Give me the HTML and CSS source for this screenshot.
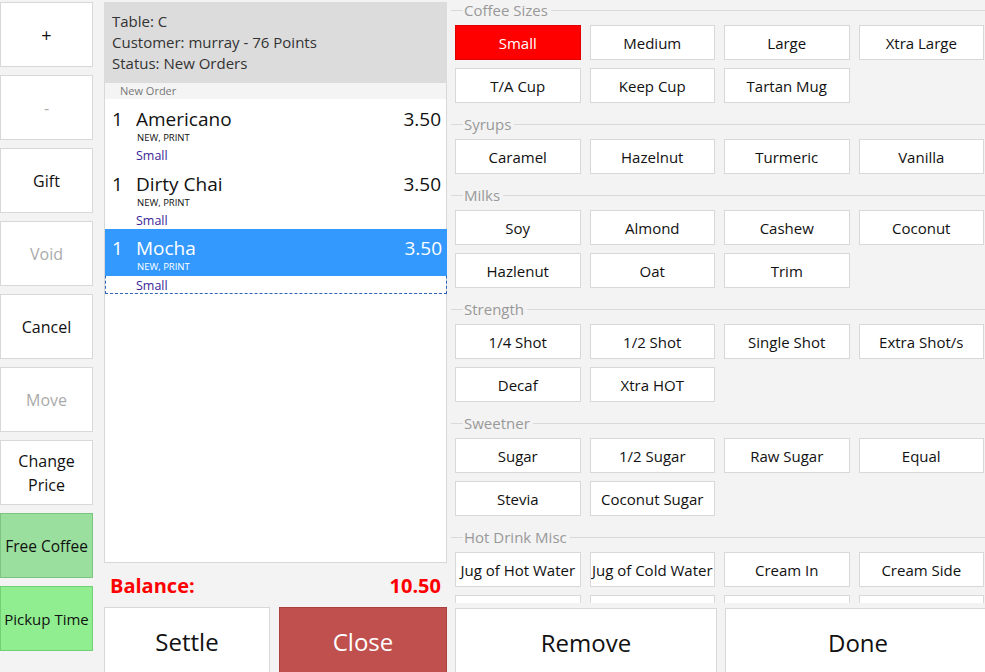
FILE: index.html
```html
<!DOCTYPE html>
<html lang="en">
<head>
    <meta charset="UTF-8">
    <title>Order - Table C</title>
    <link rel="stylesheet" href="styles.css">
</head>
<body>
    <div class="pos">
        <div class="actions">
            <button class="btn plus">+</button>
            <button class="btn off">-</button>
            <button class="btn">Gift</button>
            <button class="btn off">Void</button>
            <button class="btn">Cancel</button>
            <button class="btn off">Move</button>
            <button class="btn">Change<br>Price</button>
            <button class="btn free">Free Coffee</button>
            <button class="btn pickup">Pickup Time</button>
        </div>

        <div class="order">
            <div class="info">
                <div>Table: C</div>
                <div>Customer: murray - 76 Points</div>
                <div>Status: New Orders</div>
            </div>
            <div class="list">
                <div class="list-head">New Order</div>
                <div class="item">
                    <div class="item-top">
                        <div class="item-line"><span class="qty">1</span><span class="name">Americano</span><span class="price">3.50</span></div>
                        <div class="tag">NEW, PRINT</div>
                    </div>
                    <div class="mod">Small</div>
                </div>
                <div class="item">
                    <div class="item-top">
                        <div class="item-line"><span class="qty">1</span><span class="name">Dirty Chai</span><span class="price">3.50</span></div>
                        <div class="tag">NEW, PRINT</div>
                    </div>
                    <div class="mod">Small</div>
                </div>
                <div class="item selected">
                    <div class="item-top">
                        <div class="item-line"><span class="qty">1</span><span class="name">Mocha</span><span class="price">3.50</span></div>
                        <div class="tag">NEW, PRINT</div>
                    </div>
                    <div class="mod">Small</div>
                </div>
            </div>
            <div class="balance"><span>Balance:</span><span>10.50</span></div>
            <div class="pair">
                <button class="big">Settle</button>
                <button class="big close">Close</button>
            </div>
        </div>

        <div class="mods">
            <div class="groups">
                <div class="group">
                    <div class="legend"><span>Coffee Sizes</span></div>
                    <div class="grid">
                        <button class="opt on">Small</button>
                        <button class="opt">Medium</button>
                        <button class="opt">Large</button>
                        <button class="opt">Xtra Large</button>
                        <button class="opt">T/A Cup</button>
                        <button class="opt">Keep Cup</button>
                        <button class="opt">Tartan Mug</button>
                    </div>
                </div>
                <div class="group">
                    <div class="legend"><span>Syrups</span></div>
                    <div class="grid">
                        <button class="opt">Caramel</button>
                        <button class="opt">Hazelnut</button>
                        <button class="opt">Turmeric</button>
                        <button class="opt">Vanilla</button>
                    </div>
                </div>
                <div class="group">
                    <div class="legend"><span>Milks</span></div>
                    <div class="grid">
                        <button class="opt">Soy</button>
                        <button class="opt">Almond</button>
                        <button class="opt">Cashew</button>
                        <button class="opt">Coconut</button>
                        <button class="opt">Hazlenut</button>
                        <button class="opt">Oat</button>
                        <button class="opt">Trim</button>
                    </div>
                </div>
                <div class="group">
                    <div class="legend"><span>Strength</span></div>
                    <div class="grid">
                        <button class="opt">1/4 Shot</button>
                        <button class="opt">1/2 Shot</button>
                        <button class="opt">Single Shot</button>
                        <button class="opt">Extra Shot/s</button>
                        <button class="opt">Decaf</button>
                        <button class="opt">Xtra HOT</button>
                    </div>
                </div>
                <div class="group">
                    <div class="legend"><span>Sweetner</span></div>
                    <div class="grid">
                        <button class="opt">Sugar</button>
                        <button class="opt">1/2 Sugar</button>
                        <button class="opt">Raw Sugar</button>
                        <button class="opt">Equal</button>
                        <button class="opt">Stevia</button>
                        <button class="opt">Coconut Sugar</button>
                    </div>
                </div>
                <div class="group">
                    <div class="legend"><span>Hot Drink Misc</span></div>
                    <div class="grid">
                        <button class="opt">Jug of Hot Water</button>
                        <button class="opt">Jug of Cold Water</button>
                        <button class="opt">Cream In</button>
                        <button class="opt">Cream Side</button>
                        <button class="opt"></button>
                        <button class="opt"></button>
                        <button class="opt"></button>
                        <button class="opt"></button>
                    </div>
                </div>
            </div>
            <div class="pair wide">
                <button class="big">Remove</button>
                <button class="big">Done</button>
            </div>
        </div>
    </div>
</body>
</html>
```

FILE: styles.css
```css
body {
    margin: 0;
    background-color: #f3f3f3;
    font-family: 'Open Sans', 'Noto Sans', sans-serif;
    overflow: hidden;
    height: 672px;
}

button {
    font-family: inherit;
    cursor: pointer;
}

.pos {
    display: flex;
    align-items: flex-start;
}

/* left action column */
.actions {
    width: 93px;
    flex-shrink: 0;
    padding-top: 2px;
    display: flex;
    flex-direction: column;
    gap: 8px;
}

.btn {
    height: 65px;
    background: #fff;
    border: 1px solid #d8d8d8;
    font-size: 16px;
    line-height: 24px;
    color: #111;
    padding: 0;
}

.btn.plus {
    font-size: 18px;
}

.btn.off {
    color: #aaa;
}

.btn.free {
    background: #9adf9e;
    border-color: #7cc580;
    font-size: 15.5px;
}

.btn.pickup {
    background: #90ee90;
    border-color: #73cf73;
    font-size: 15px;
}

/* order panel */
.order {
    width: 343px;
    flex-shrink: 0;
    margin-left: 11px;
    padding-top: 2px;
    display: flex;
    flex-direction: column;
}

.info {
    background: #dcdcdc;
    height: 81px;
    padding: 9px 0 0 8px;
    box-sizing: border-box;
    font-size: 15px;
    line-height: 21px;
    color: #333;
}

.list {
    background: #fff;
    border: 1px solid #d8d8d8;
    border-top: none;
    height: 480px;
    box-sizing: border-box;
}

.list-head {
    background: #f4f4f4;
    height: 16px;
    font-size: 11px;
    line-height: 16px;
    color: #777;
    padding-left: 15px;
}

.item {
    height: 65px;
    box-sizing: border-box;
    border: 1px dashed transparent;
    margin: 0 -1px 0 0;
}

.item-top {
    height: 46px;
}

.item-line {
    display: flex;
    align-items: center;
    height: 32px;
    padding: 5px 5px 0 6px;
    box-sizing: border-box;
    font-size: 19px;
    color: #111;
}

.qty {
    width: 24px;
}

.name {
    flex: 1;
}

.tag {
    font-size: 9.5px;
    line-height: 12px;
    padding-left: 31px;
    color: #111;
}

.mod {
    font-size: 12.5px;
    line-height: 20px;
    padding-left: 30px;
    color: #3a1f99;
}

.item.selected {
    border-color: #2f63b8;
}

.item.selected .item-top {
    background: #3399ff;
    margin: -1px -1px 0 -1px;
    height: 47px;
}

.item.selected .item-line {
    padding-top: 6px;
    padding-left: 7px;
    padding-right: 5px;
}

.item.selected .item-line,
.item.selected .tag {
    color: #fff;
}

.item.selected .tag {
    padding-left: 32px;
}

.balance {
    height: 44px;
    display: flex;
    justify-content: space-between;
    align-items: center;
    padding: 0 6px 0 6px;
    font-size: 20px;
    font-weight: bold;
    color: #ff0000;
}

.pair {
    display: grid;
    grid-template-columns: 166px 168px;
    gap: 9px;
}

.big {
    height: 68px;
    background: #fff;
    border: 1px solid #d8d8d8;
    font-size: 24px;
    color: #111;
    padding: 0;
}

.big.close {
    background: #c0504d;
    border-color: #a9403d;
    color: #fff;
}

/* modifiers panel */
.mods {
    width: 534px;
    flex-shrink: 0;
    margin-left: 4px;
    display: flex;
    flex-direction: column;
}

.groups {
    height: 603px;
    padding-top: 2px;
    box-sizing: border-box;
    overflow: hidden;
}

.group {
    padding-bottom: 13px;
}

.legend {
    display: flex;
    align-items: center;
    height: 16px;
    margin-bottom: 7px;
    font-size: 15px;
    line-height: 16px;
    color: #999;
}

.legend::before {
    content: "";
    width: 12px;
    border-top: 1px solid #d9d9d9;
}

.legend::after {
    content: "";
    flex: 1;
    border-top: 1px solid #d9d9d9;
}

.legend span {
    padding: 0 3px 0 1px;
}

.grid {
    display: grid;
    grid-template-columns: repeat(4, 1fr);
    gap: 8px 9px;
    padding: 0 1px 0 4px;
}

.opt {
    height: 35px;
    background: #fff;
    border: 1px solid #d8d8d8;
    font-size: 15px;
    color: #111;
    padding: 0;
    white-space: nowrap;
    overflow: hidden;
}

.opt.on {
    background: #ff0000;
    border-color: #e00000;
    color: #fff;
}

.pair.wide {
    margin-top: 5px;
    padding-left: 4px;
    grid-template-columns: 262px 266px;
    gap: 8px;
}
```
